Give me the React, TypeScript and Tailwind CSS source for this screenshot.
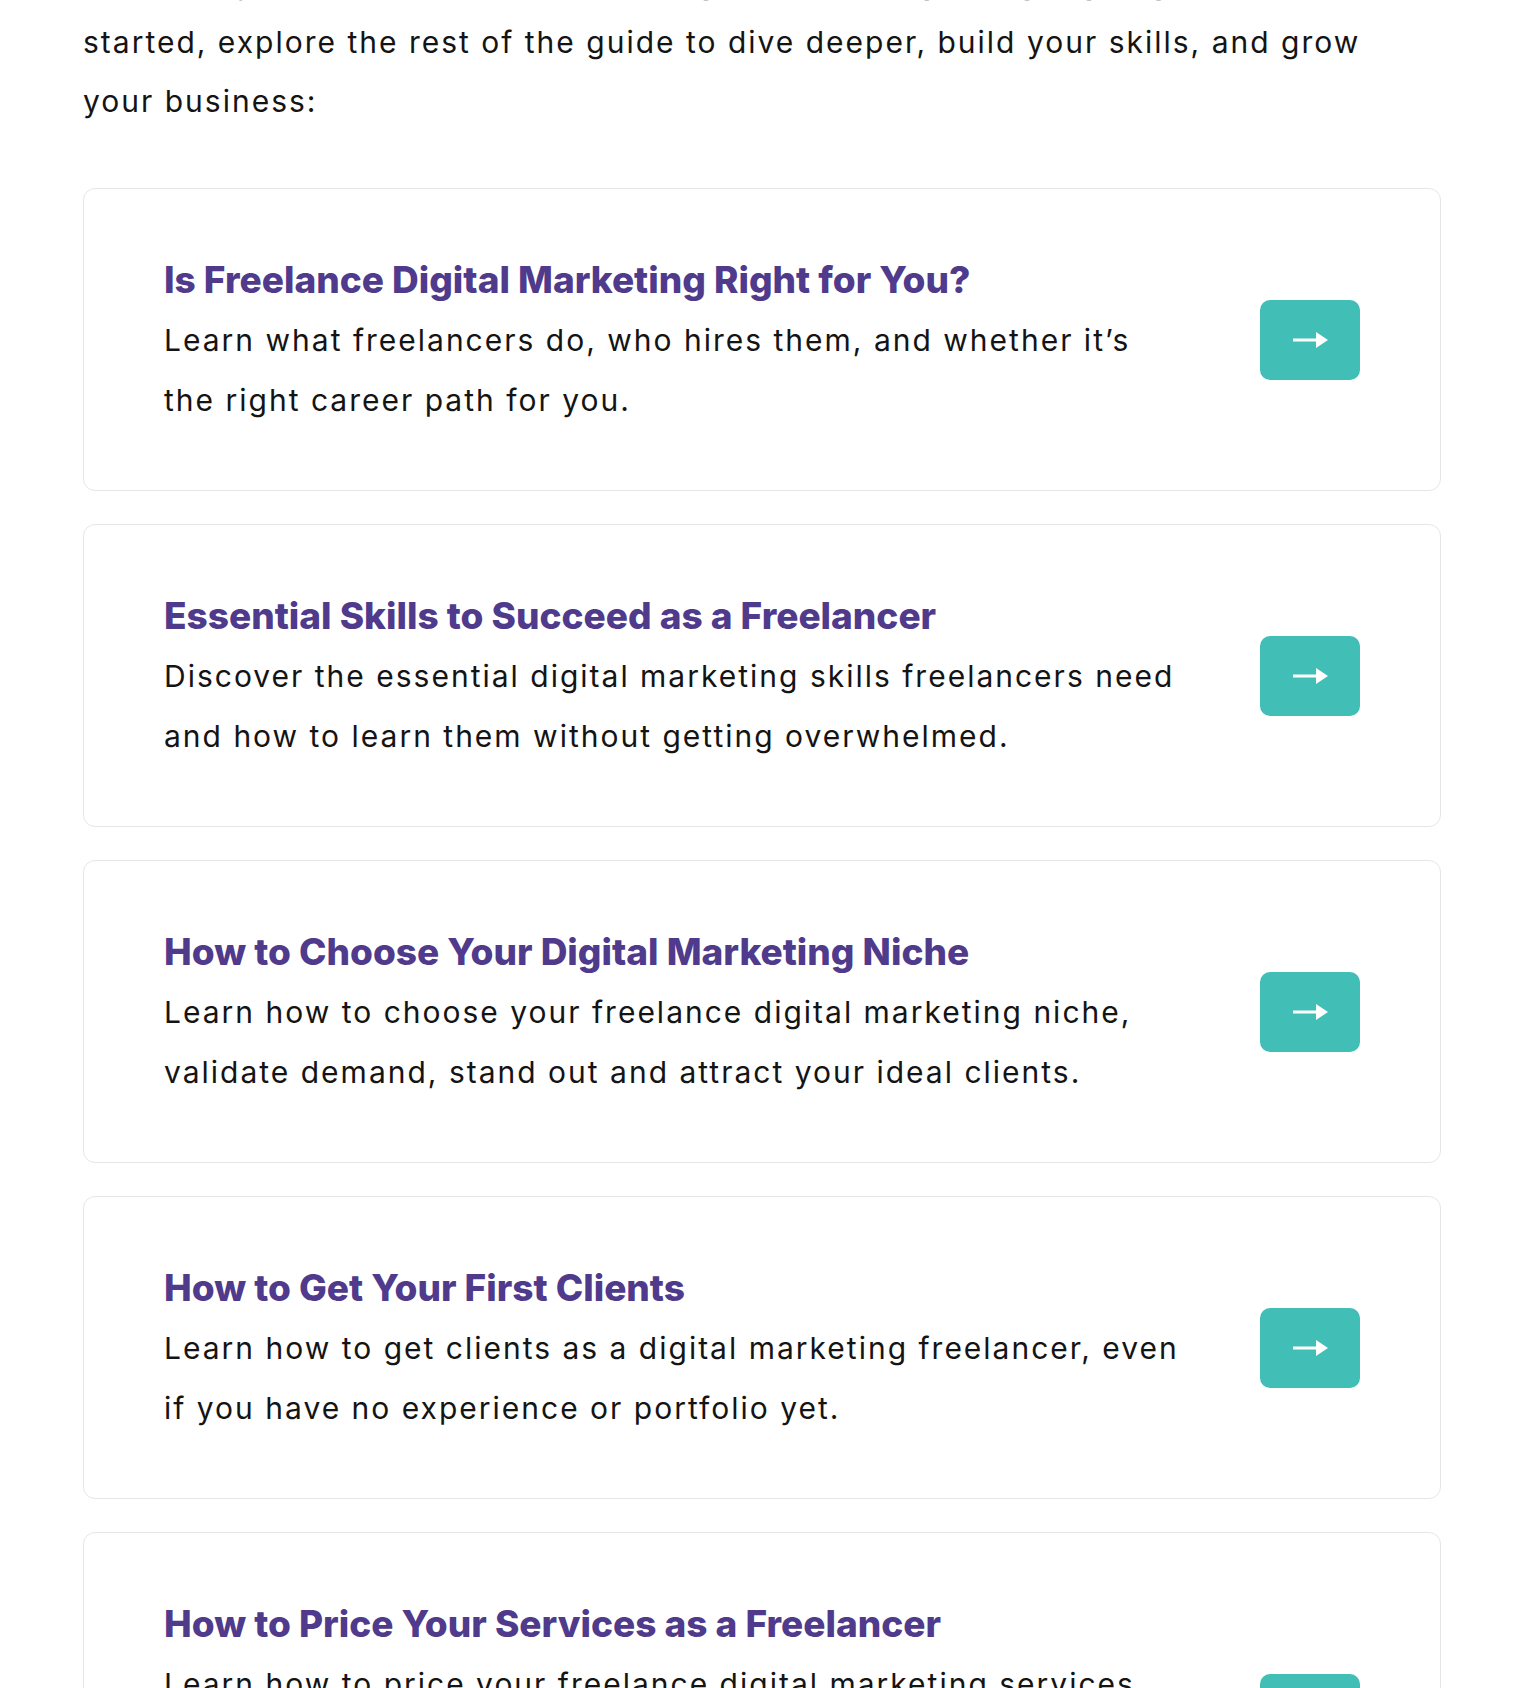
import React from "react";

const guides = [
  {
    title: "Is Freelance Digital Marketing Right for You?",
    lines: [
      "Learn what freelancers do, who hires them, and whether it’s",
      "the right career path for you.",
    ],
  },
  {
    title: "Essential Skills to Succeed as a Freelancer",
    lines: [
      "Discover the essential digital marketing skills freelancers need",
      "and how to learn them without getting overwhelmed.",
    ],
  },
  {
    title: "How to Choose Your Digital Marketing Niche",
    lines: [
      "Learn how to choose your freelance digital marketing niche,",
      "validate demand, stand out and attract your ideal clients.",
    ],
  },
  {
    title: "How to Get Your First Clients",
    lines: [
      "Learn how to get clients as a digital marketing freelancer, even",
      "if you have no experience or portfolio yet.",
    ],
  },
  {
    title: "How to Price Your Services as a Freelancer",
    lines: [
      "Learn how to price your freelance digital marketing services,",
      "pick the right pricing model and set your rates with",
      "confidence so you get paid what you’re worth.",
    ],
  },
];

const ArrowRight = () => (
  <svg width="35" height="16" viewBox="0 0 35 16" fill="white">
    <rect x="0" y="6.5" width="25" height="3" />
    <polygon points="23,0 35,8 23,16" />
  </svg>
);

const GuideCard = ({ title, lines }: { title: string; lines: string[] }) => (
  <div className="flex items-center justify-between rounded-xl border border-[#e6e6e6] bg-white px-[80px] pt-[61px] pb-[60px]">
    <div className="flex flex-col">
      <h3 className="text-[37px] font-extrabold leading-[60px] text-[#4f3a8c]">
        {title}
      </h3>
      <p className="text-[30px] leading-[60px] tracking-[2px] text-[#141414]">
        {lines.map((line, i) => (
          <span key={i} className="block whitespace-nowrap">
            {line}
          </span>
        ))}
      </p>
    </div>
    <button className="flex h-[80px] w-[100px] shrink-0 items-center justify-center rounded-[10px] bg-[#41bfb6]">
      <ArrowRight />
    </button>
  </div>
);

export default function App() {
  return (
    <div className="h-[1688px] overflow-hidden bg-white font-['Inter',sans-serif]">
      <div className="ml-[83px] w-[1358px]">
        {/* intro paragraph, first line sits above the fold */}
        <p className="mt-[-46px] text-[30px] leading-[59px] tracking-[2px] text-[#141414]">
          Now that you know what it takes to begin freelancing and get going
          <br />
          started, explore the rest of the guide to dive deeper, build your skills, and grow
          <br />
          your business:
        </p>

        <div className="mt-[57px] flex flex-col gap-[33px]">
          {guides.map((g) => (
            <GuideCard key={g.title} title={g.title} lines={g.lines} />
          ))}
        </div>
      </div>
    </div>
  );
}
